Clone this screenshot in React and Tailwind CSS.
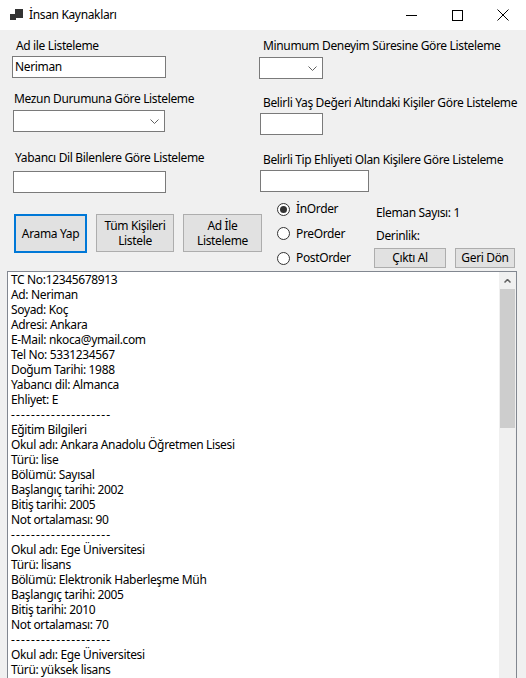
import React from 'react';

// satırlar: kişi bilgileri çıktısı
const LINES = [
  'TC No:12345678913',
  'Ad: Neriman',
  'Soyad: Koç',
  'Adresi: Ankara',
  'E-Mail: nkoca@ymail.com',
  'Tel No: 5331234567',
  'Doğum Tarihi: 1988',
  'Yabancı dil: Almanca',
  'Ehliyet: E',
  '--------------------',
  'Eğitim Bilgileri',
  'Okul adı: Ankara Anadolu Öğretmen Lisesi',
  'Türü: lise',
  'Bölümü: Sayısal',
  'Başlangıç tarihi: 2002',
  'Bitiş tarihi: 2005',
  'Not ortalaması: 90',
  '--------------------',
  'Okul adı: Ege Üniversitesi',
  'Türü: lisans',
  'Bölümü: Elektronik Haberleşme Müh',
  'Başlangıç tarihi: 2005',
  'Bitiş tarihi: 2010',
  'Not ortalaması: 70',
  '--------------------',
  'Okul adı: Ege Üniversitesi',
  'Türü: yüksek lisans',
];

function Label({ children, className = '' }) {
  return <div className={`h-[16px] leading-[16px] whitespace-nowrap ${className}`}>{children}</div>;
}

function TextBox({ value = '', className = '' }) {
  return (
    <div className={`h-[22px] bg-white border border-[#7a7a7a] px-[2px] leading-[20px] ${className}`}>
      {value}
    </div>
  );
}

function ComboBox({ className = '' }) {
  return (
    <div className={`h-[22px] bg-white border border-[#7a7a7a] flex items-center justify-end pr-[5px] ${className}`}>
      <svg width="9" height="5" viewBox="0 0 9 5">
        <path d="M0.5 0.5 L4.5 4.5 L8.5 0.5" fill="none" stroke="#606060" strokeWidth="1" />
      </svg>
    </div>
  );
}

function Radio({ checked, label }) {
  return (
    <div className="flex items-center h-[16px]">
      <div className="w-[13px] h-[13px] rounded-full border border-[#333] bg-white flex items-center justify-center">
        {checked && <div className="w-[7px] h-[7px] rounded-full bg-[#333]" />}
      </div>
      <span className="ml-[6px]">{label}</span>
    </div>
  );
}

export default function App() {
  return (
    <div
      className="w-[526px] h-[678px] overflow-hidden text-[12px] tracking-[-0.35px] text-black"
      style={{ fontFamily: '"Noto Sans", "Open Sans", sans-serif' }}
    >
      {/* başlık çubuğu */}
      <div className="h-[30px] bg-white flex items-center">
        <svg className="ml-[10px]" width="13" height="12" viewBox="0 0 13 12">
          <rect x="0" y="5" width="6" height="6" fill="#333" />
          <rect x="5" y="0" width="8" height="9" fill="#333" />
        </svg>
        <span className="ml-[6px] leading-[16px]">İnsan Kaynakları</span>
        <div className="ml-auto flex items-center h-full">
          <div className="w-[46px] h-full flex items-center justify-center">
            <div className="w-[11px] h-px bg-black" />
          </div>
          <div className="w-[46px] h-full flex items-center justify-center">
            <div className="w-[11px] h-[11px] border border-black" />
          </div>
          <div className="w-[46px] h-full flex items-center justify-center">
            <svg width="12" height="12" viewBox="0 0 12 12">
              <path d="M0.5 0.5 L11.5 11.5 M11.5 0.5 L0.5 11.5" stroke="#000" strokeWidth="1" />
            </svg>
          </div>
        </div>
      </div>

      {/* form alanı */}
      <div className="bg-[#f0f0f0] h-[648px]">
        <div className="flex pt-[8px]">
          {/* sol sütun */}
          <div className="ml-[12px] w-[154px] flex flex-col">
            <Label className="ml-[4px]">Ad ile Listeleme</Label>
            <TextBox value="Neriman" className="mt-[2px] w-[154px]" />
            <Label className="ml-[2px] mt-[13px]">Mezun Durumuna Göre Listeleme</Label>
            <ComboBox className="mt-[3px] ml-[1px] w-[152px]" />
            <Label className="ml-[3px] mt-[18px]">Yabancı Dil Bilenlere Göre Listeleme</Label>
            <TextBox className="mt-[5px] ml-[1px] w-[153px]" />
          </div>
          {/* sağ sütun */}
          <div className="ml-[93px] flex flex-col">
            <Label className="ml-[4px]">Minumum Deneyim Süresine Göre Listeleme</Label>
            <ComboBox className="mt-[3px] w-[64px]" />
            <Label className="ml-[4px] mt-[16px]">Belirli Yaş Değeri Altındaki Kişiler Göre Listeleme</Label>
            <TextBox className="mt-[2px] ml-[1px] w-[63px]" />
            <Label className="ml-[4px] mt-[17px]">Belirli Tip Ehliyeti Olan Kişilere Göre Listeleme</Label>
            <TextBox className="mt-[2px] ml-[1px] w-[109px]" />
          </div>
        </div>

        {/* butonlar ve seçenekler */}
        <div className="flex mt-[8px] h-[68px]">
          <div className="flex items-start mt-[13px]">
            <button className="ml-[14px] w-[73px] h-[39px] bg-[#e1e1e1] border-2 border-[#0078d7] leading-[15px]">
              Arama Yap
            </button>
            <button className="ml-[9px] w-[78px] h-[38px] bg-[#e1e1e1] border border-[#adadad] leading-[15px]">
              Tüm Kişileri<br />Listele
            </button>
            <button className="ml-[9px] w-[79px] h-[38px] bg-[#e1e1e1] border border-[#adadad] leading-[15px]">
              Ad İle<br />Listeleme
            </button>
          </div>
          <div className="ml-[15px] w-[97px] flex flex-col gap-[8.5px] mt-0">
            <Radio checked label="İnOrder" />
            <Radio label="PreOrder" />
            <Radio label="PostOrder" />
          </div>
          <div className="flex flex-col">
            <Label className="ml-[2px] mt-[4px]">Eleman Sayısı: 1</Label>
            <Label className="ml-[2px] mt-[7px]">Derinlik:</Label>
            <div className="flex mt-[4px]">
              <button className="w-[72px] h-[20px] bg-[#e1e1e1] border border-[#adadad] leading-[18px]">Çıktı Al</button>
              <button className="ml-[9px] w-[60px] h-[20px] bg-[#e1e1e1] border border-[#adadad] leading-[18px]">Geri Dön</button>
            </div>
          </div>
        </div>

        {/* çıktı kutusu */}
        <div className="ml-[7px] mt-[2px] w-[510px] h-[420px] bg-white border border-[#828790] flex">
          <div className="flex-1 pl-[3px] overflow-hidden">
            {LINES.map((line, i) => (
              <div
                key={i}
                className={`h-[15px] leading-[15px] whitespace-nowrap ${line.startsWith('---') ? 'tracking-[1.15px]' : ''}`}
              >
                {line}
              </div>
            ))}
          </div>
          <div className="w-[17px] bg-[#f0f0f0] flex flex-col items-center">
            <div className="h-[17px] flex items-center justify-center">
              <svg width="7" height="4" viewBox="0 0 7 4">
                <path d="M0.5 3.5 L3.5 0.5 L6.5 3.5" fill="none" stroke="#606060" strokeWidth="1.5" />
              </svg>
            </div>
            <div className="w-[15px] h-[139px] bg-[#cdcdcd]" />
          </div>
        </div>
      </div>
    </div>
  );
}
